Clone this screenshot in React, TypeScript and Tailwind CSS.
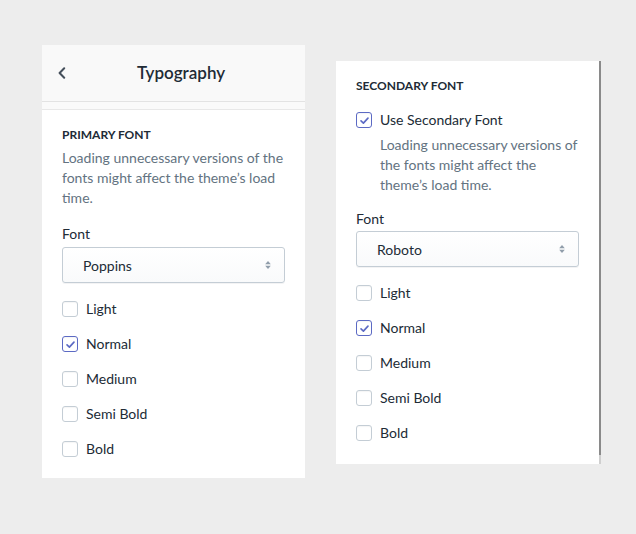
import React, { useState } from "react";

const WEIGHTS = ["Light", "Normal", "Medium", "Semi Bold", "Bold"];

const FONT = { fontFamily: "Lato, 'Liberation Sans', sans-serif" };

function Check({ checked }: { checked: boolean }) {
  return (
    <span
      className={`flex h-4 w-4 shrink-0 items-center justify-center rounded-[3px] border bg-white shadow-[inset_0_1px_1px_rgba(0,0,0,0.04)] ${
        checked ? "border-[#5c6ac4]" : "border-[#c4cdd5]"
      }`}
    >
      {checked && (
        <svg viewBox="0 0 12 12" className="h-[11px] w-[11px]" fill="none" stroke="#5c6ac4" strokeWidth="1.8" strokeLinecap="round" strokeLinejoin="round">
          <path d="M2.2 6.4 4.8 8.8 9.8 3.4" />
        </svg>
      )}
    </span>
  );
}

function CheckRow({ label, checked, onClick }: { label: string; checked: boolean; onClick: () => void }) {
  return (
    <button onClick={onClick} className="flex h-5 items-center gap-2 text-left text-[14px] leading-5 text-[#212b36]">
      <Check checked={checked} />
      <span>{label}</span>
    </button>
  );
}

function Select({ value, className }: { value: string; className?: string }) {
  return (
    <div
      className={`flex h-[36px] items-center justify-between rounded-[3px] border border-[#c4cdd5] bg-gradient-to-b from-white to-[#f9fafb] pl-[20px] pr-[12px] text-[14px] text-[#212b36] shadow-[0_1px_0_rgba(22,29,37,0.05)] ${className || ""}`}
    >
      <span>{value}</span>
      <svg viewBox="0 0 10 14" className="h-[12px] w-[8px]" fill="#919eab">
        <path d="M5 2 8.5 6H1.5Z" />
        <path d="M5 12 1.5 8h7Z" />
      </svg>
    </div>
  );
}

function Weights({ initial }: { initial: string }) {
  const [sel, setSel] = useState<string[]>([initial]);
  const toggle = (w: string) => setSel(sel.includes(w) ? sel.filter((x) => x !== w) : [...sel, w]);
  return (
    <div className="mt-4 flex flex-col gap-[15px]">
      {WEIGHTS.map((w) => (
        <CheckRow key={w} label={w} checked={sel.includes(w)} onClick={() => toggle(w)} />
      ))}
    </div>
  );
}

export default function App() {
  const [useSecondary, setUseSecondary] = useState(true);

  return (
    <div className="flex min-h-[534px] items-start gap-[31px] bg-[#ededed] pl-[42px] pt-[45px]" style={FONT}>
      {/* primary panel */}
      <div className="w-[263px]">
        <div className="flex h-[56px] items-center bg-[#f9f9f9] px-4 shadow-[0_1px_0_#e3e3e3]">
          <button className="flex w-11 items-center">
            <svg viewBox="0 0 8 12" className="h-[12px] w-[8px]" fill="none" stroke="#454f5b" strokeWidth="2" strokeLinecap="round" strokeLinejoin="round">
              <path d="M6.2 1.2 1.6 6l4.6 4.8" />
            </svg>
          </button>
          <h2 className="mr-[29px] flex-1 text-center text-[17px] font-semibold text-[#212b36]">Typography</h2>
        </div>
        <div className="mt-px h-2 border-b border-[#e8e8e8] bg-[#fafafa]" />
        <div className="bg-white px-5 pb-[19px] pt-[17px]">
          <h3 className="text-[12px] font-bold uppercase leading-4 text-[#212b36]">Primary Font</h3>
          <p className="mt-[5px] text-[14px] leading-5 text-[#637381]">
            Loading unnecessary versions of the fonts might affect the theme’s load time.
          </p>
          <div className="mt-4 text-[14px] leading-5 text-[#212b36]">Font</div>
          <Select value="Poppins" className="mt-[3px]" />
          <Weights initial="Normal" />
        </div>
      </div>

      {/* secondary panel */}
      <div className="mt-4 flex w-[265px] bg-white">
        <div className="flex-1 px-5 pb-[21px] pt-[17px]">
          <h3 className="text-[12px] font-bold uppercase leading-4 text-[#212b36]">Secondary Font</h3>
          <div className="mt-4">
            <CheckRow label="Use Secondary Font" checked={useSecondary} onClick={() => setUseSecondary(!useSecondary)} />
          </div>
          <p className="mt-[5px] pl-6 text-[14px] leading-5 text-[#637381]">
            Loading unnecessary versions of the fonts might affect the theme’s load time.
          </p>
          <div className="mt-[14px] text-[14px] leading-5 text-[#212b36]">Font</div>
          <Select value="Roboto" className="mt-[2px]" />
          <Weights initial="Normal" />
        </div>
        <div className="flex w-[2px] flex-col bg-[#cfcfcf]">
          <div className="flex-1 bg-[#8a8a8a]" />
          <div className="h-[9px]" />
        </div>
      </div>
    </div>
  );
}
